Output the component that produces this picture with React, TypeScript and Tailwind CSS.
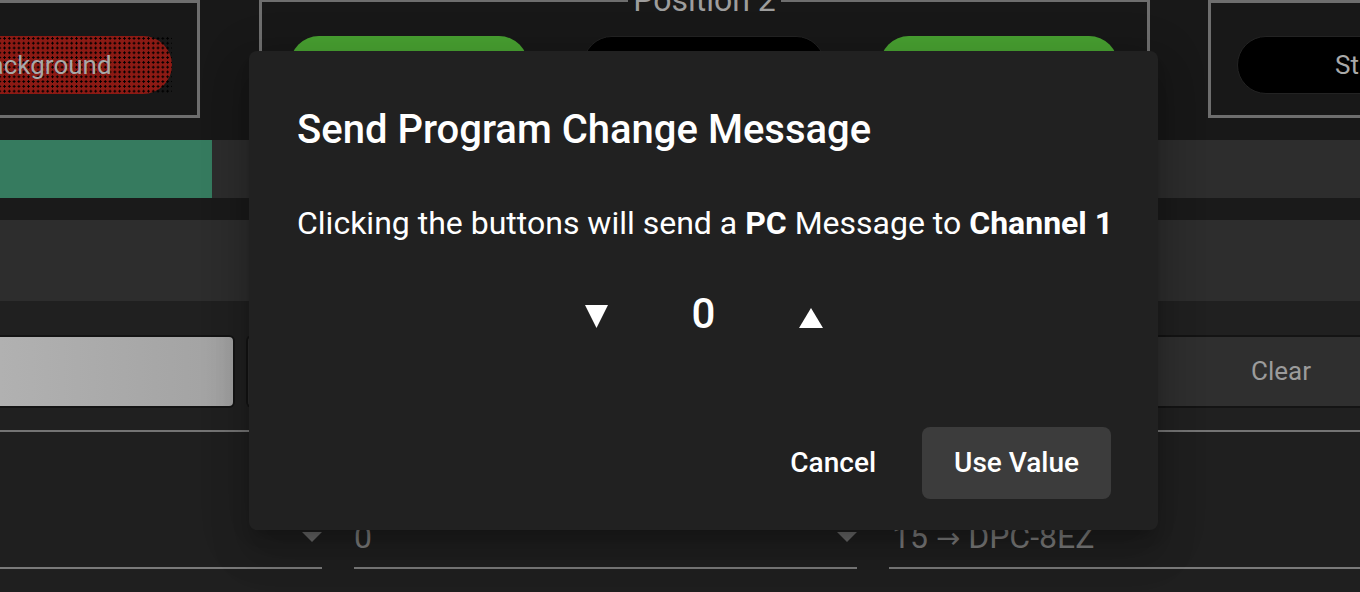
import React from "react";

const Down = ({ w, h, color }: { w: number; h: number; color: string }) => (
  <svg width={w} height={h} viewBox={`0 0 ${w} ${h}`}>
    <polygon points={`0,0 ${w},0 ${w / 2},${h}`} fill={color} />
  </svg>
);

const Up = ({ w, h, color }: { w: number; h: number; color: string }) => (
  <svg width={w} height={h} viewBox={`0 0 ${w} ${h}`}>
    <polygon points={`0,${h} ${w},${h} ${w / 2},0`} fill={color} />
  </svg>
);

const App = () => {
  return (
    <div className="relative h-[592px] w-[1360px] overflow-hidden bg-[#181818] font-['Roboto',sans-serif]">
      {/* top row */}
      <div className="flex h-[118px] items-start">
        <div className="-ml-[40px] flex h-[118px] w-[240px] shrink-0 justify-end border-[3px] border-[#6e6e6e] pt-[33px] pr-[25px]">
          <div className="h-[58px] w-[261px] shrink-0 bg-[radial-gradient(circle,#000_1px,transparent_1.3px)] bg-[length:4.8px_4.8px]">
            <div className="flex h-[58px] items-center justify-center rounded-full bg-[#8c1a14] bg-[radial-gradient(circle,#000_1px,transparent_1.3px)] bg-[length:4.8px_4.8px] pl-[2px] text-[26px] text-[#a8a8a8]">
              Background
            </div>
          </div>
        </div>

        <fieldset className="-mt-[16px] ml-[59px] h-[134px] w-[891px] shrink-0 border-[3px] border-[#6e6e6e]">
          <legend className="mx-auto px-[5px] text-[32px] leading-[32px] text-[#9d9d9d]">Position 2</legend>
          <div className="mt-[20px] flex gap-[55px] pl-[28px]">
            <div className="h-[58px] w-[238px] rounded-full bg-[#48a031]" />
            <div className="h-[58px] w-[242px] rounded-full border border-[#222] bg-black" />
            <div className="h-[58px] w-[238px] rounded-full bg-[#48a031]" />
          </div>
        </fieldset>

        <div className="ml-[58px] h-[118px] w-[220px] shrink-0 border-[3px] border-[#6e6e6e] pt-[33px] pl-[26px]">
          <div className="flex h-[58px] w-[240px] items-center rounded-full border border-[#232323] bg-black pl-[97px] text-[26px] text-[#a9a9a9]">
            Strobe
          </div>
        </div>
      </div>

      {/* progress */}
      <div className="mt-[22px] flex h-[58px] bg-[#2d2d2d]">
        <div className="w-[212px] bg-[#367b5f]" />
      </div>
      <div className="h-[22px] bg-[#1a1a1a]" />
      <div className="h-[81px] bg-[#2d2d2d]" />

      {/* buttons row */}
      <div className="bg-[#202020] pt-[34px] pb-[22px]">
        <div className="flex h-[73px] gap-[11px]">
          <div className="w-[235px] shrink-0 rounded-r-[6px] border-2 border-l-0 border-[#141414] bg-gradient-to-r from-[#b1b1b1] to-[#a2a2a2]" />
          <div className="flex flex-1 items-center justify-end rounded-l-[6px] border-2 border-r-0 border-[#141414] bg-[#2f2f2f]">
            <span className="w-[158px] text-center text-[26px] text-[#9b9b9b]">Clear</span>
          </div>
        </div>
      </div>
      <div className="h-[2px] bg-[#747474]" />

      {/* selects */}
      <div className="flex h-[160px] gap-[32px] bg-[#1f1f1f] pt-[89px]">
        <div className="flex h-[48px] w-[322px] shrink-0 items-start justify-end border-b-2 border-[#7a7a7a]">
          <div className="mt-[11px]">
            <Down w={20} h={10} color="#6b6b6b" />
          </div>
        </div>
        <div className="flex h-[48px] w-[503px] shrink-0 items-start justify-between border-b-2 border-[#7a7a7a]">
          <span className="text-[32px] leading-[32px] text-[#7c7c7c]">0</span>
          <div className="mt-[11px]">
            <Down w={20} h={10} color="#6b6b6b" />
          </div>
        </div>
        <div className="flex h-[48px] flex-1 items-start border-b-2 border-[#7a7a7a]">
          <span className="pl-[3px] text-[32px] leading-[32px] whitespace-nowrap text-[#7c7c7c]">
            15 <span className="font-['DejaVu_Sans',sans-serif] text-[29px]">→</span> DPC-8EZ
          </span>
        </div>
      </div>

      {/* dialog */}
      <div className="absolute top-[51px] left-[249px] w-[909px] rounded-[8px] bg-[#212121] pt-[47px] pr-[47px] pb-[31px] pl-[48px] text-white shadow-[0_11px_15px_-7px_rgba(0,0,0,0.2),0_24px_38px_3px_rgba(0,0,0,0.14),0_9px_46px_8px_rgba(0,0,0,0.12)]">
        <h2 className="text-[40px] leading-[64px] font-medium">Send Program Change Message</h2>
        <p className="mt-[37px] text-[32px] leading-[48px] whitespace-nowrap">
          Clicking the buttons will send a <b className="font-bold">PC</b> Message to{" "}
          <b className="font-bold">Channel 1</b>
        </p>
        <div className="mt-[39px] -ml-[48px] -mr-[47px] flex h-[60px] items-start justify-center">
          <div className="flex w-[107px] justify-center pt-[19px]">
            <Down w={23} h={23} color="#ffffff" />
          </div>
          <div className="flex w-[107px] justify-center">
            <span className="text-[42px] leading-[56px] font-medium">0</span>
          </div>
          <div className="flex w-[107px] justify-center pt-[22px]">
            <Up w={24} h={20} color="#ffffff" />
          </div>
        </div>
        <div className="mt-[81px] flex justify-end gap-[30px]">
          <button className="h-[72px] px-[16px] text-[28px] font-medium">Cancel</button>
          <button className="h-[72px] rounded-[8px] bg-[#3c3c3c] px-[32px] text-[28px] font-medium">Use Value</button>
        </div>
      </div>
    </div>
  );
};

export default App;
